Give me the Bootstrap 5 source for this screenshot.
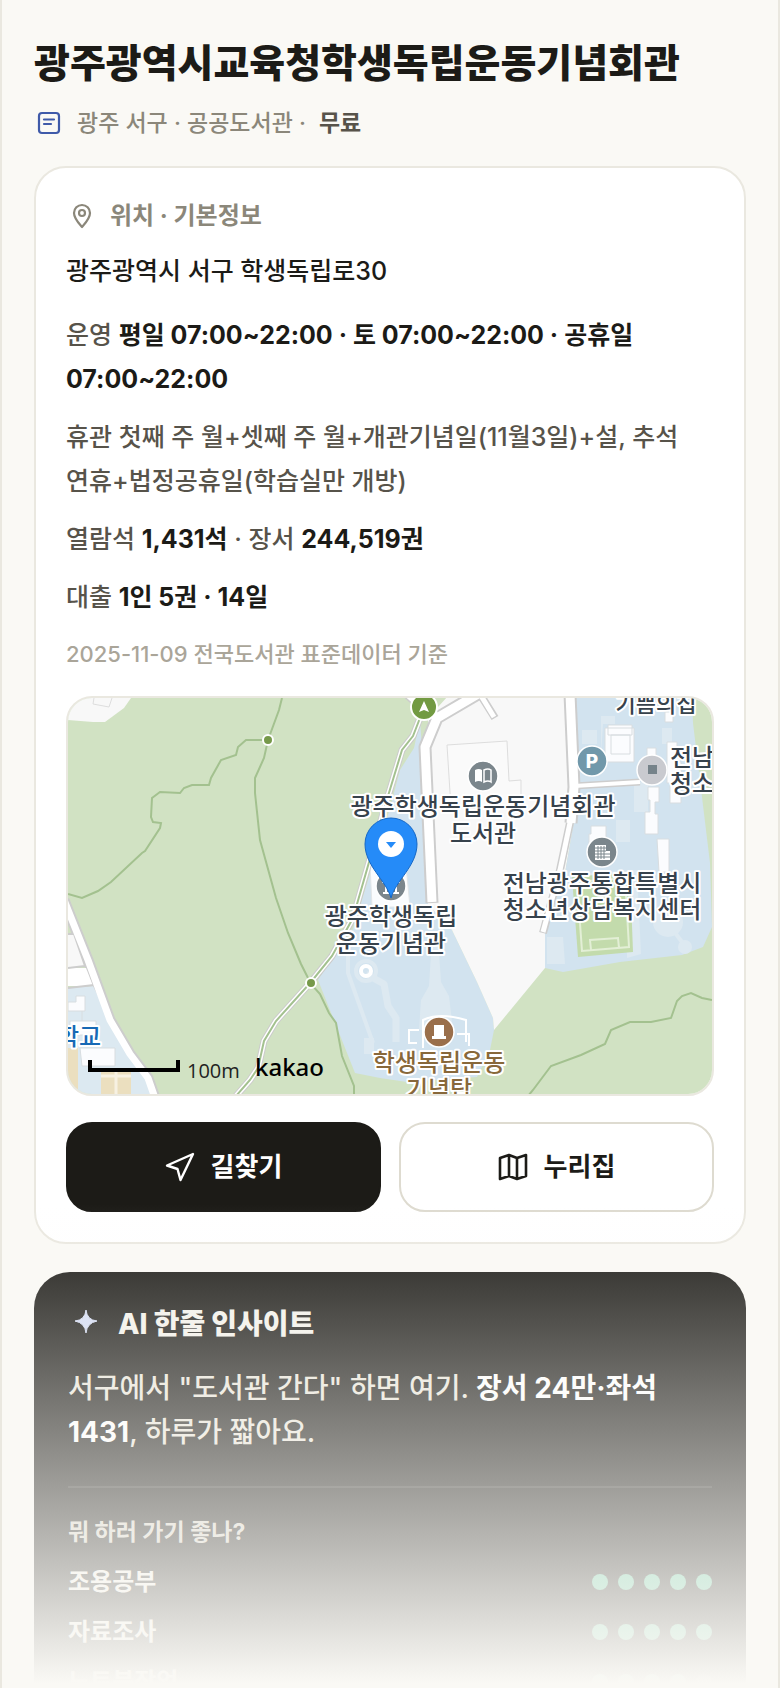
<!DOCTYPE html>
<html lang="ko">
<head>
<meta charset="utf-8">
<meta name="viewport" content="width=device-width, initial-scale=1">
<title>광주광역시교육청학생독립운동기념회관</title>
<link href="https://cdn.jsdelivr.net/npm/bootstrap@5.3.0/dist/css/bootstrap.min.css" rel="stylesheet">
<style>
  :root { --paper:#faf9f5; --ink:#1c1b17; --sub:#57534a; --muted:#8b877a; --faint:#aaa599; --line:#eae8e0; }
  body { font-family: Inter, "Noto Sans CJK KR", sans-serif; background: var(--paper); color: var(--ink); word-break: keep-all; }
  .sheet { height: 100vh; overflow: hidden; border: solid var(--line); border-width: 0 2px; padding: 34px 32px 0; }
  .sheet-title { font-size: 39px; line-height: 58px; font-weight: 800; }
  .meta { font-size: 23px; line-height: 36px; font-weight: 500; color: var(--muted); margin-top: 13px; gap: 13px; }
  .meta strong { color: var(--sub); font-weight: 700; }
  .info-card { margin-top: 25px; border: 2px solid var(--line); border-radius: 32px; padding: 30px; }
  .section-head { font-size: 24px; line-height: 36px; font-weight: 700; color: var(--muted); gap: 12px; }
  .address { font-size: 25px; line-height: 38px; font-weight: 500; margin-top: 18px; }
  .facts p { font-size: 25px; line-height: 44px; font-weight: 500; color: var(--sub); margin: 14px 0 0; }
  .facts p:first-child { margin-top: 23px; }
  .facts strong { color: var(--ink); font-weight: 700; }
  .source { font-size: 22px; line-height: 34px; font-weight: 500; color: var(--faint); margin-top: 18px; }
  .map-box { margin-top: 25px; border: 2px solid var(--line); border-radius: 26px; height: 400px; }
  .map-box svg { display: block; width: 100%; height: 100%; }
  .actions { margin-top: 26px; gap: 18px; }
  .btn-act { flex: 1 1 0; font-size: 26px; line-height: 38px; font-weight: 700; border-radius: 26px; border-width: 2px; height: 90px; gap: 16px; }
  .btn-go { background: var(--ink); color: #fff; border-color: var(--ink); }
  .btn-site { background: #fff; color: var(--ink); border-color: #dedbd0; }
  .insight { margin-top: 28px; background: var(--ink); border-radius: 36px; padding: 32px 34px; color: #f3f1ea; }
  .insight-head { font-size: 28px; line-height: 40px; font-weight: 800; gap: 14px; }
  .insight-text { font-size: 28px; line-height: 44px; font-weight: 500; color: #e9e5da; margin-top: 22px; }
  .insight-text strong { color: #fff; font-weight: 700; }
  .insight-rule { border-top: 2px solid #34332f; margin-top: 32px; padding-top: 26px; }
  .rate-title { font-size: 23px; line-height: 36px; font-weight: 700; color: #d5d1c6; }
  .rate-row { font-size: 24px; line-height: 36px; font-weight: 600; margin-top: 14px; }
  .dots { gap: 10px; }
  .dot { width: 16px; height: 16px; border-radius: 50%; background: #5cc39a; }
  .dot-off { background: #45443f; }
  .fade-out { height: 484px; pointer-events: none; background: linear-gradient(rgba(250,249,245,0), #faf9f5 99%); }
</style>
</head>
<body>
<main class="sheet position-relative">
  <h1 class="sheet-title m-0">광주광역시교육청학생독립운동기념회관</h1>
  <div class="meta d-flex align-items-center">
    <svg width="30" height="30" viewBox="0 0 30 30" fill="none" stroke="#3f5aa9" stroke-width="2.2" stroke-linecap="round" aria-hidden="true"><rect x="5" y="5" width="20" height="20" rx="3"/><path d="M10 11.500h10M10 16h7"/></svg>
    <span>광주 서구 · 공공도서관 ·</span><strong>무료</strong>
  </div>

  <section class="info-card bg-white">
    <div class="section-head d-flex align-items-center">
      <svg width="32" height="32" viewBox="0 0 32 32" fill="none" stroke="currentColor" stroke-width="2.200" stroke-linejoin="round" aria-hidden="true"><path d="M16 27C13 23.500 8 18.500 8 13a8 8 0 0 1 16 0c0 5.500-5 10.500-8 14z"/><circle cx="16" cy="13" r="3"/></svg>
      <span>위치 · 기본정보</span>
    </div>
    <div class="address">광주광역시 서구 학생독립로30</div>
    <div class="facts">
      <p>운영 <strong>평일 07:00~22:00 · 토 07:00~22:00 · 공휴일 07:00~22:00</strong></p>
      <p>휴관 첫째 주 월+셋째 주 월+개관기념일(11월3일)+설, 추석 연휴+법정공휴일(학습실만 개방)</p>
      <p>열람석 <strong>1,431석</strong> · 장서 <strong>244,519권</strong></p>
      <p>대출 <strong>1인 5권 · 14일</strong></p>
    </div>
    <div class="source">2025-11-09 전국도서관 표준데이터 기준</div>

    <div class="map-box overflow-hidden">
      <svg viewBox="0 0 644 396" preserveAspectRatio="xMidYMid slice" role="img" aria-label="지도">
        <defs>
          <style>
            .lbl { font-family: Inter, "Noto Sans CJK KR", sans-serif; font-size: 24px; font-weight: 500; fill: #37424c; stroke: #fff; stroke-width: 4px; paint-order: stroke; stroke-linejoin: round; text-anchor: middle; }
            .lbl-sm { font-size: 22px; }
            .lbl-site { fill: #88683a; }
            .lbl-school { fill: #1769b5; }
            .trail { fill: none; stroke: #a3c18f; stroke-width: 2; }
          </style>
        </defs>
        <rect width="644" height="396" fill="#d1e2c3"/>
        <!-- open ground and campus -->
        <path d="M0 0H63L56 10 37 24H25L0 22z" fill="#f8f8f8"/>
        <path d="M26 0l-1 6 16 3 3-9" fill="none" stroke="#ddd"/>
        <path d="M352 22L346 50 332 72 322 110 290 215 282 240 262 263 250 282 287 375 312 380 339 384 409 379 422 352 426 332 425 320 409 284 384 232 364 190z" fill="#d2e3ef"/>
        <path d="M380 -2H508L512 89 497 175 477 235V270L426 332 425 320 409 284 384 232 360 206V20z" fill="#f8f8f8"/>
        <path d="M505 0H624L625 25 642 165 644 229 635 249 614 257 552 264 495 274 477 270V235L497 175 512 89z" fill="#d2e3ef"/>
        <!-- paved areas inside the campus -->
        <g fill="#dde9f1">
          <path d="M514 32h15v14h-15zM535 26h12v-8h-14v40zM479 239h16l2 27h-18zM505 176l64-4 4 84-14 4v-70l-54 4zM566 84h14v30h-14zM548 122h14v22h-14zM594 30h10v16h-10z"/>
          <circle cx="600" cy="224" r="15"/><circle cx="617" cy="249" r="7"/>
          <path d="M364 240h6l3 44 8 14 4 34h-34l2-30 8-14zM296 340h10v16h-10z"/>
        </g>
        <g fill="none" stroke="#dde9f1" stroke-width="4" stroke-linejoin="round">
          <path d="M284 232L280 250V275L305 345M608 236l6 8"/>
          <path d="M298 276l18 10 4 22 8 12v24" stroke-width="7"/><circle cx="298" cy="273" r="10"/>
        </g>
        <path d="M355 350v-28q16-8 43 0v22M341 344v-12h10M389 336h12v12M341 334v11h8" fill="none" stroke="#fff" stroke-width="2"/>
        <circle cx="298" cy="273" r="5" fill="none" stroke="#fff" stroke-width="4"/>
        <!-- roads -->
        <g fill="none" stroke="#cdcdcd" stroke-linejoin="round">
          <path d="M410-4L369 20 357 49 364 205" stroke-width="13"/>
          <path d="M338-4L356 12 372 18M412-4l15 24" stroke-width="8"/>
          <path d="M502-4L506 89 503 125" stroke-width="13"/><path d="M503 120L492 172 475 235" stroke-width="8"/><path d="M506 88L572 84" stroke-width="7"/>
          <path d="M-4 202L20 262 42 322 62 356 80 380 87 400" stroke-width="11"/>
        </g>
        <path d="M0 290L25 288 42 322 62 356 80 380 87 400H0z" fill="#dce9f1"/>
        <path d="M0 270H18L25 288H0z" fill="#fff"/>
        <path d="M0 236H6L17 268 0 270" fill="#f8f8f8" stroke="#cdcdcd" stroke-width="2"/><path d="M0 290L26 287" stroke="#cdcdcd" stroke-width="2"/>
        <g fill="none" stroke="#fff" stroke-linejoin="round">
          <path d="M410-4L369 20 357 49 364 204" stroke-width="9"/>
          <path d="M338-4L356 12 372 18M412-4l14 23" stroke-width="5"/>
          <path d="M502-4L506 89 503 125" stroke-width="9"/><path d="M503 120L492 172 475 234" stroke-width="5"/><path d="M506 88L572 84" stroke-width="4"/>
          <path d="M-4 202L20 262 42 322 62 356 80 380 87 400" stroke-width="7"/>
        </g>
        <path d="M0 350H10V396H0zM33 374h30v22H33z" fill="#ebdfbf"/><path d="M48 374v22M33 378h30" stroke="#f7f1e2" stroke-width="3"/>
        <path d="M0 304h8v-6h9v15H0zM14 313v10M2 323h26v14H2zM12 350h35v18H14z" fill="#fbfcfe" stroke="#d8dde0"/>
        <!-- buildings -->
        <path d="M379 47L439 43 441 83 453 82V110H383z" fill="#fafafa" stroke="#ddd"/>
        <path d="M302 167h36l4 42h-38z" fill="#fafcfe" stroke="#e2e6e8"/>
        <path d="M537 30h29v34h-29zM540 27h24v10h-24zM543 37h19v19h-19zM579 50h9v9h-9zM597 14h8v10h-8zM599 44h10v20h4v41h-11v-20h-3zM580 89h11v15h-4v12h3v20h-13v-22h5v-12h-2zM589 141h12v33h-10zM523 128h15v22h-17v-14h2z" fill="#fbfcfe" stroke="#d8dde0"/>
        <path d="M504 179L562 174 565 254 510 259z" fill="#c3dbac"/>
        <path d="M509 184L557 180 561 249 514 253zM523 252L522 242 550 240 551 250" fill="none" stroke="#e3efd6" stroke-width="2"/>
        <!-- trails -->
        <g fill="none" stroke-linejoin="round">
          <path d="M352 20L345 38 334 52 327 75 320 98 285 220 264 258 243 284 208 323 196 343 190 370 182 382 168 398" stroke="#cbcbcb" stroke-width="7"/>
          <path d="M352 20L345 38 334 52 327 75 320 98 285 220 264 258 243 284 208 323 196 343 190 370 182 382 168 398" stroke="#fff" stroke-width="5"/>
        </g>
        <g class="trail">
          <path d="M352 20L345 38 334 52 327 75 320 98 285 220 264 258 243 284 208 323 196 343 190 370 182 382 168 398"/>
          <path d="M214 0L211 12 200 42 196 60 187 80V95L192 142 208 200 220 235 233 266 243 286 252 296 261 315 268 325 274 358 286 388V398"/>
          <path d="M200 42H178L170 49 168 57 153 62 143 80 141 87H124L116 90 112 95 92 94 84 100 83 119 85 124 93 125 92 130 77 153 74 155 43 184 30 193 14 200 0 196"/>
          <path d="M644 302L634 300 623 295 614 298 609 303 603 320 583 324H562L543 332 537 346 513 357 483 368 465 392 460 398"/>
        </g>
        <g fill="#76994a" stroke="#fff" stroke-width="2"><circle cx="200" cy="42" r="5"/><circle cx="243" cy="285" r="5"/></g>
        <circle cx="356" cy="9" r="13" fill="#729a42" stroke="#fff" stroke-width="2"/><path d="M356 3l5 11-5-2-5 2z" fill="#fff"/>
        <!-- place markers -->
        <g stroke="#fff" stroke-width="1.500">
          <circle cx="415" cy="78" r="15" fill="#7b868c"/><circle cx="524" cy="63" r="15" fill="#7198aa"/>
          <circle cx="584" cy="72" r="15" fill="#c9cacf"/><circle cx="534" cy="154" r="15" fill="#7b868c"/>
          <circle cx="323" cy="188" r="15" fill="#7b868c"/><circle cx="371" cy="334" r="15" fill="#9a6f4b"/>
        </g>
        <path d="M407 72q4-2 7 0v12q-3-2-7 0z" fill="#fff"/><path d="M416 72q4-2 7 0v12q-3-2-7 0z" fill="none" stroke="#fff" stroke-width="1.500"/>
        <text x="524" y="70" text-anchor="middle" font-family="Inter, sans-serif" font-size="19" font-weight="800" fill="#fff">P</text>
        <rect x="580" y="67" width="9" height="9" fill="#76838a"/>
        <path d="M527 147h11v6h4v9h-15z" fill="#fff"/><path d="M530 148v13M533 148v13M536 148v13M527 150h11M527 153h11M527 156h15M527 159h15" stroke="#7b868c"/>
        <path d="M314 184h18M315 195h16M318 184v11M323 184v11M328 184v11" stroke="#fff" stroke-width="2"/>
        <path d="M366 327h10v11h2v3h-14v-3h2z" fill="#fff"/>
        <text class="lbl" x="415" y="117">광주학생독립운동기념회관</text>
        <text class="lbl" x="415" y="144">도서관</text>
        <text class="lbl" x="534" y="194">전남광주통합특별시</text>
        <text class="lbl" x="534" y="220">청소년상담복지센터</text>
        <text class="lbl" x="323" y="227">광주학생독립</text>
        <text class="lbl" x="323" y="254">운동기념관</text>
        <text class="lbl lbl-sm" x="588" y="14">기쁨의집</text>
        <text class="lbl" x="624" y="68">전남</text>
        <text class="lbl" x="624" y="94">청소</text>
        <text class="lbl lbl-site" x="371" y="373">학생독립운동</text>
        <text class="lbl lbl-site" x="371" y="400">기념탑</text>
        <text class="lbl lbl-school" x="11" y="347">학교</text>
        <!-- current place pin -->
        <path d="M323 200C318 182 297 168 297 146a26 26 0 0 1 52 0C349 168 328 182 323 200z" fill="#258bf8" stroke="#1668c6"/>
        <circle cx="323" cy="146" r="13" fill="#fff"/><path d="M318 144h10l-5 6z" fill="#258bf8"/>
        <!-- scale -->
        <path d="M22 362V372H110V362" fill="none" stroke="#000" stroke-width="4"/>
        <text x="119" y="380" font-family="'Open Sans', sans-serif" font-size="20" fill="#222">100m</text>
        <text x="187" y="378" font-family="'Noto Sans', sans-serif" font-size="24" font-weight="500" fill="#000">kakao</text>
      </svg>
    </div>

    <div class="actions d-flex">
      <button type="button" class="btn btn-act btn-go d-flex align-items-center justify-content-center">
        <svg width="30" height="30" viewBox="0 0 30 30" fill="none" stroke="currentColor" stroke-width="2.400" stroke-linejoin="round" aria-hidden="true"><path d="M28 2L2 13.500l10.500 3.500L15.500 28z"/></svg>길찾기</button>
      <button type="button" class="btn btn-act btn-site d-flex align-items-center justify-content-center">
        <svg width="30" height="30" viewBox="0 0 30 30" fill="none" stroke="currentColor" stroke-width="2.600" stroke-linejoin="round" aria-hidden="true"><path d="M2 6l9-3 8 3 9-3v21l-9 3-8-3-9 3zM11 3v21M19 6v21"/></svg>누리집</button>
    </div>
  </section>

  <section class="insight">
    <div class="insight-head d-flex align-items-center">
      <svg width="36" height="36" viewBox="0 0 36 36" fill="#d3dbf3" aria-hidden="true"><path d="M18 4Q19 14 29 15Q19 17 18 27Q17 17 7 15Q17 14 18 4z" stroke="#d3dbf3"/></svg>
      <span>AI 한줄 인사이트</span>
    </div>
    <div class="insight-text">서구에서 "도서관 간다" 하면 여기. <strong>장서 24만·좌석 1431</strong>, 하루가 짧아요.</div>
    <div class="insight-rule">
      <div class="rate-title">뭐 하러 가기 좋나?</div>
      <div class="rate-row d-flex justify-content-between align-items-center"><span>조용공부</span><span class="dots d-flex"><i class="dot"></i><i class="dot"></i><i class="dot"></i><i class="dot"></i><i class="dot"></i></span></div>
      <div class="rate-row d-flex justify-content-between align-items-center"><span>자료조사</span><span class="dots d-flex"><i class="dot"></i><i class="dot"></i><i class="dot"></i><i class="dot"></i><i class="dot"></i></span></div>
      <div class="rate-row d-flex justify-content-between align-items-center"><span>노트북작업</span><span class="dots d-flex"><i class="dot"></i><i class="dot"></i><i class="dot"></i><i class="dot"></i><i class="dot dot-off"></i></span></div>
    </div>
  </section>
  <div class="fade-out position-absolute bottom-0 start-0 end-0"></div>
</main>
<script src="https://cdn.jsdelivr.net/npm/bootstrap@5.3.0/dist/js/bootstrap.bundle.min.js"></script>
</body>
</html>
